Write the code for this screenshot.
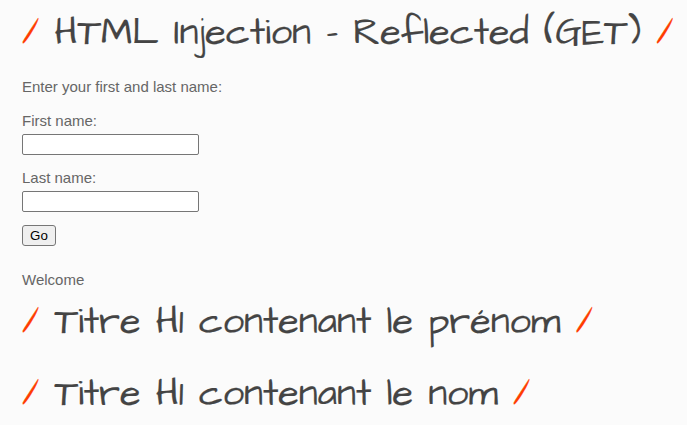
<main>
  <h1><span>/</span> HTML Injection - Reflected (GET) <span>/</span></h1>
  <form onsubmit={(e) => e.preventDefault()}>
    <p class="intro">Enter your first and last name:</p>
    <div class="field">
      <label for="firstname">First name:</label>
      <input id="firstname" type="text" />
    </div>
    <div class="field">
      <label for="lastname">Last name:</label>
      <input id="lastname" type="text" />
    </div>
    <button type="submit">Go</button>
  </form>
  <p class="welcome">Welcome</p>
  <h1><span>/</span> Titre H1 contenant le prénom <span>/</span></h1>
  <h1><span>/</span> Titre H1 contenant le nom <span>/</span></h1>
</main>

<style>
  :global(body) {
    background: #fbfbfb;
  }
  main {
    width: 687px;
    height: 425px;
    overflow: hidden;
    background: #fbfbfb;
    color: #666;
    font: 15px/20px "Liberation Sans", Arial, sans-serif;
  }
  h1 {
    box-sizing: border-box;
    margin: 0;
    padding: 3px 0 0 22px;
    height: 72px;
    color: #444;
    font: 400 37.92px/60px "Architects Daughter", Lato, sans-serif;
    -webkit-text-stroke: 0.2px;
    white-space: nowrap;
  }
  h1 span {
    color: #ff3d00;
  }
  form {
    display: flex;
    flex-direction: column;
    align-items: flex-start;
    padding: 5px 22px 0;
  }
  p {
    margin: 0;
  }
  .intro {
    margin-bottom: 14px;
  }
  .field {
    display: flex;
    flex-direction: column;
    height: 57px;
    gap: 3px;
  }
  input {
    box-sizing: border-box;
    width: 177px;
    height: 21px;
    padding: 1px 2px;
    border: 1px solid #767676;
    border-radius: 2px;
    background: #fff;
  }
  button {
    box-sizing: border-box;
    width: 34px;
    height: 21px;
    padding: 0;
    border: 1px solid #767676;
    border-radius: 3px;
    background: #efefef;
    color: #000;
    font: 13.333px/19px "Liberation Sans", Arial, sans-serif;
  }
  .welcome {
    margin: 24px 22px 0;
    height: 19px;
  }
</style>
